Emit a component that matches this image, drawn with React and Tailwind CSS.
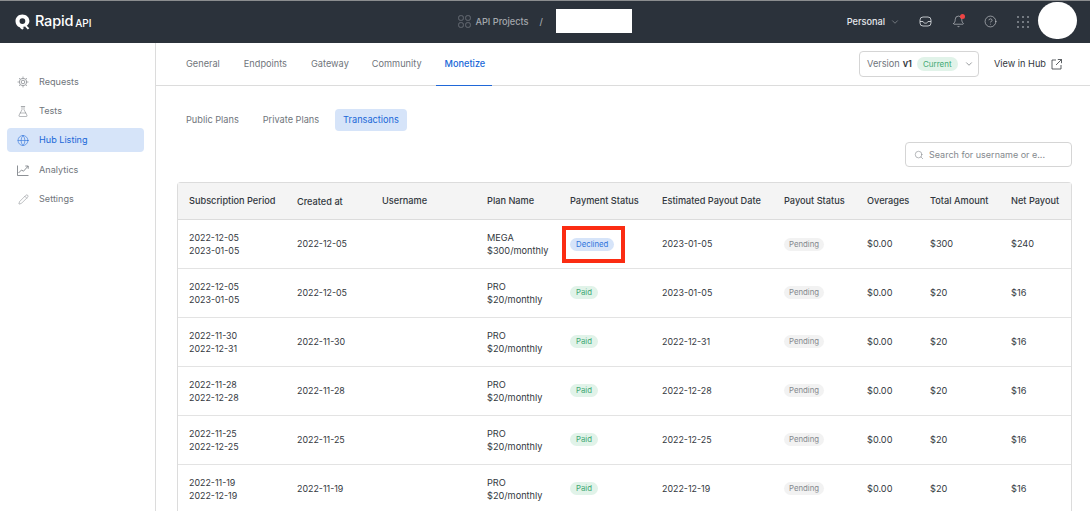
import React from "react";
import { ChevronDown, Search, CircleHelp, Bell, FlaskConical, Globe, Pencil } from "lucide-react";

const COLS = "grid grid-cols-[108px_85px_105px_83px_92px_122px_83px_63px_81px_1fr]";

const rows = [
  ["2022-12-05", "2023-01-05", "2022-12-05", "MEGA", "$300/monthly", "Declined", "2023-01-05", "$300", "$240"],
  ["2022-12-05", "2023-01-05", "2022-12-05", "PRO", "$20/monthly", "Paid", "2023-01-05", "$20", "$16"],
  ["2022-11-30", "2022-12-31", "2022-11-30", "PRO", "$20/monthly", "Paid", "2022-12-31", "$20", "$16"],
  ["2022-11-28", "2022-12-28", "2022-11-28", "PRO", "$20/monthly", "Paid", "2022-12-28", "$20", "$16"],
  ["2022-11-25", "2022-12-25", "2022-11-25", "PRO", "$20/monthly", "Paid", "2022-12-25", "$20", "$16"],
  ["2022-11-19", "2022-12-19", "2022-11-19", "PRO", "$20/monthly", "Paid", "2022-12-19", "$20", "$16"],
];

const heads = ["Subscription Period", "Created at", "Username", "Plan Name", "Payment Status", "Estimated Payout Date", "Payout Status", "Overages", "Total Amount", "Net Payout"];

function Logo() {
  return (
    <svg width="15" height="16" viewBox="0 0 15 16">
      <path
        fillRule="evenodd"
        fill="#fff"
        d="M7.300.6C3.300.6.500 3.500.500 7.200c0 2.900 1.700 5.200 4.200 6.100.7 1 1.700 2 3 2.200l1.300-1.700-1.600-.8c3.900.1 7-2.600 7-5.900C14.400 3.500 11.400.6 7.300.6zM7.400 4.200a2.900 2.900 0 1 1 0 5.800 2.900 2.900 0 0 1 0-5.800z"
      />
      <path d="M11.500 11.500l2.800 2.700-1.500 1.300-2.800-2.900z" fill="#fff" />
    </svg>
  );
}

function Inbox() {
  return (
    <svg width="13" height="11" viewBox="0 0 13 11" fill="none" stroke="#e5e7eb" strokeWidth="0.8">
      <rect x="1" y="1" width="11" height="9" rx="3" />
      <path d="M1 5.500h3c.5 1.200 1.300 1.700 2.500 1.700S8.500 6.700 9 5.500h3" />
    </svg>
  );
}

function Dots() {
  return (
    <svg width="12" height="12" viewBox="0 0 12 12" fill="#d1d5db">
      {[1, 6, 11].flatMap((y) => [1, 6, 11].map((x) => <circle key={`${x}-${y}`} cx={x} cy={y} r="0.8" />))}
    </svg>
  );
}

function Projects() {
  return (
    <svg width="13" height="13" viewBox="0 0 13 13" fill="none" stroke="#6b7178" strokeWidth="0.9">
      <rect x="0.700" y="0.700" width="4.600" height="4.600" rx="1.400" />
      <rect x="7.700" y="0.700" width="4.600" height="4.600" rx="1.400" />
      <rect x="0.700" y="7.700" width="4.600" height="4.600" rx="1.400" />
      <rect x="7.700" y="7.700" width="4.600" height="4.600" rx="1.400" />
    </svg>
  );
}

function RequestsIcon() {
  return (
    <svg width="12" height="12" viewBox="0 0 12 12" fill="none" stroke="#85898e" strokeWidth="0.8">
      <circle cx="6" cy="6" r="1.800" />
      <circle cx="6" cy="6" r="3.700" />
      <path d="M6 .6v1.200M6 10.200v1.200M.6 6h1.200M10.200 6h1.200M2.200 2.200l.8.8M9 9l.8.8M2.200 9.800l.8-.8M9 3l.8-.8" />
    </svg>
  );
}

function AnalyticsIcon() {
  return (
    <svg width="12" height="11" viewBox="0 0 12 11" fill="none" stroke="#70757b" strokeWidth="0.8">
      <path d="M.5.500v10h11" />
      <path d="M1.500 8l3-3 2 1.200 4.500-5" />
      <path d="M8.300 1H11.200v2.800" />
    </svg>
  );
}

function OutLink() {
  return (
    <svg width="11" height="11" viewBox="0 0 11 11" fill="none" stroke="#33383e" strokeWidth="0.8">
      <path d="M5 1H1v9h9V6" />
      <path d="M6.800.500h3.700v3.700M10.500.500L5 6" />
    </svg>
  );
}

function Side({ icon, label, active, className }) {
  return (
    <div className={`flex items-center h-6 w-[137px] rounded pl-[10px] gap-[10px] text-[9.100px] ${active ? "bg-[#d6e4f9] text-[#2068d8]" : "text-[#70757b]"} ${className || ""}`}>
      <span className="w-3 flex justify-center">{icon}</span>
      <span>{label}</span>
    </div>
  );
}

function Pill({ children, tone }) {
  const c = {
    Declined: "bg-[#d6e4f9] text-[#2f74dc] px-[6px]",
    Paid: "bg-[#e1f3e9] text-[#3fa873] px-[6px]",
    Pending: "bg-[#f2f2f2] text-[#85898e] px-[5px]",
  }[tone];
  return <span className={`inline-flex items-center h-[13px] rounded-full text-[7.800px] ${c}`}>{children}</span>;
}

export default function App() {
  return (
    <div className="w-[1090px] h-[511px] overflow-hidden bg-white flex flex-col opacity-[.999] font-['Inter',sans-serif] text-[#33383e]">
      <header className="h-[43px] shrink-0 bg-[#2b323b] border-t border-[#8b8d8f] pb-[1px] flex items-center relative">
        <div className="flex items-center pl-[15px] gap-[5px] text-white">
          <Logo />
          <span className="text-[14.500px] font-medium tracking-[-0.2px] leading-none">Rapid</span>
          <span className="text-[10px] font-medium leading-none mt-[2px] -ml-[3px]">API</span>
        </div>
        <div className="flex items-center ml-[367px] text-[9.200px] text-[#a4a8ad] font-medium">
          <Projects />
          <span className="ml-[4px]">API Projects</span>
          <span className="ml-[11px]">/</span>
          <div className="ml-[13px] w-[76px] h-6 bg-white -mt-[1px]" />
        </div>
        <div className="flex items-center ml-auto text-[#e5e7eb]">
          <span className="text-[9.200px] font-medium">Personal</span>
          <ChevronDown size={10} strokeWidth={1.2} className="ml-[5px] text-[#b9bcc0]" />
          <span className="ml-[19px] flex"><Inbox /></span>
          <span className="ml-[20px] relative flex">
            <Bell size={13} strokeWidth={1} />
            <span className="absolute -top-[1px] right-0 w-[5px] h-[5px] rounded-full bg-[#ef4444]" />
          </span>
          <span className="ml-[19px] flex"><CircleHelp size={13} strokeWidth={1} /></span>
          <span className="ml-[20px] flex"><Dots /></span>
          <div className="ml-[9px] mr-[13px] w-[39px] h-[37px] -mt-[2px] rounded-full bg-white" />
        </div>
      </header>
      <div className="flex flex-1 min-h-0">
        <aside className="w-[156px] shrink-0 border-r border-[#dcdcdc] pt-[27px] pl-[7px] flex flex-col">
          <Side icon={<RequestsIcon />} label="Requests" className="mb-[5px]" />
          <Side icon={<FlaskConical size={13} strokeWidth={1} className="text-[#70757b]" />} label="Tests" className="mb-[5px]" />
          <Side icon={<Globe size={13} strokeWidth={1.100} />} label="Hub Listing" active className="mb-[6px]" />
          <Side icon={<AnalyticsIcon />} label="Analytics" className="mb-[5px]" />
          <Side icon={<Pencil size={11} strokeWidth={1} className="text-[#70757b]" />} label="Settings" />
        </aside>
        <main className="flex-1 min-w-0 flex flex-col">
          <div className="h-[43px] shrink-0 border-b border-[#dcdcdc] flex items-center text-[9.200px] text-[#70757b] pl-[30px] pr-[28px]">
            <span className="mr-[24px]">General</span>
            <span className="mr-[24px]">Endpoints</span>
            <span className="mr-[23px]">Gateway</span>
            <span className="mr-[14px]">Community</span>
            <span className="h-[43px] pl-[9px] pr-[7px] pt-[1px] flex items-center text-[#2068d8] font-medium border-b border-[#2068d8]">Monetize</span>
            <div className="ml-auto flex items-center h-[26px] w-[120px] border border-[#d5d5d5] rounded pl-[7px]">
              <span>Version</span>
              <span className="ml-[3px] font-semibold text-[#33383e]">v1</span>
              <span className="ml-[5px] h-[14px] px-[6px] rounded-full bg-[#e1f3e9] text-[#3fa873] text-[8px] flex items-center">Current</span>
              <ChevronDown size={10} strokeWidth={1.200} className="ml-[6px] text-[#33383e]" />
            </div>
            <span className="ml-[15px] text-[#33383e]">View in Hub</span>
            <span className="ml-[5px] flex"><OutLink /></span>
          </div>
          <div className="flex-1 min-h-0 pl-[21px] pr-[18px]">
            <div className="flex items-center mt-[23px] h-[22px] text-[9.200px] text-[#70757b]">
              <span className="mx-[9px]">Public Plans</span>
              <span className="ml-[15px] mr-[16px]">Private Plans</span>
              <span className="h-[22px] px-[8px] rounded bg-[#d6e4f9] text-[#2068d8] flex items-center">Transactions</span>
            </div>
            <div className="flex justify-end mt-[11px]">
              <div className="w-[167px] h-[25px] border border-[#d5d5d5] rounded flex items-center pl-[8px] text-[9px] text-[#85898e]">
                <Search size={10} strokeWidth={1.200} className="text-[#70757b]" />
                <span className="ml-[5px]">Search for username or e...</span>
              </div>
            </div>
            <div className="mt-[15px] border-x border-t border-[#dcdcdc] rounded-t text-[9.200px]">
              <div className={`${COLS} h-[37px] pl-[11px] items-center bg-[#f4f4f4] border-b border-[#dcdcdc] font-medium text-[#33383e]`}>
                {heads.map((h) => <div key={h} className={`whitespace-nowrap ${h === "Created at" ? "pt-[1px]" : ""}`}>{h}</div>)}
              </div>
              {rows.map((r, i) => (
                <div key={i} className={`${COLS} h-[49px] pl-[11px] items-center border-b border-[#e3e3e3] ${i ? "pb-[1px]" : ""}`}>
                  <div className="leading-[13px] text-[8.900px]"><div>{r[0]}</div><div>{r[1]}</div></div>
                  <div className="text-[8.900px]">{r[2]}</div>
                  <div />
                  <div className="leading-[13px]"><div>{r[3]}</div><div className="whitespace-nowrap">{r[4]}</div></div>
                  <div className={`flex ${i ? "" : "pt-[1px]"}`}><Pill tone={r[5]}>{r[5]}</Pill></div>
                  <div className="text-[8.900px]">{r[6]}</div>
                  <div className={`flex ${i ? "" : "pt-[1px]"}`}><Pill tone="Pending">Pending</Pill></div>
                  <div>$0.00</div>
                  <div>{r[7]}</div>
                  <div>{r[8]}</div>
                </div>
              ))}
            </div>
          </div>
        </main>
      </div>
      <div className="absolute left-[562px] top-[226px] w-[63px] h-[37px] border-[4px] border-[#fb2c12]" />
    </div>
  );
}
